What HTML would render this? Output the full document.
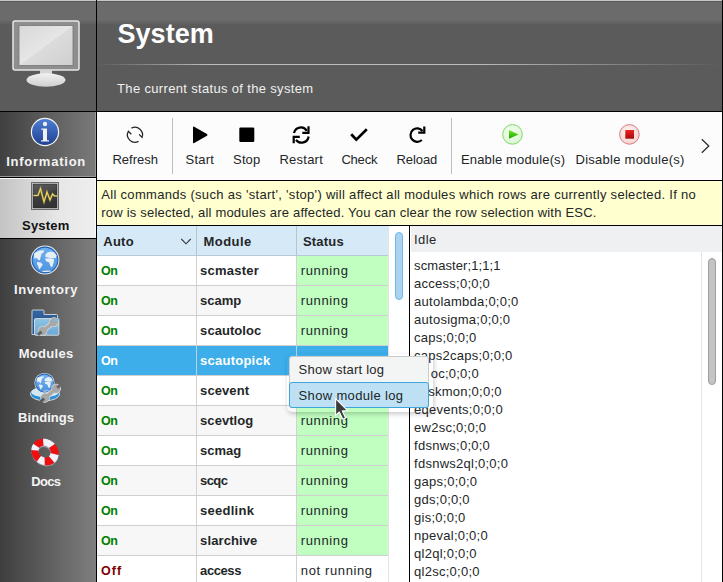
<!DOCTYPE html><html><head><meta charset="utf-8"><style>
html,body{margin:0;padding:0;width:723px;height:582px;overflow:hidden;background:#fff;}
body{position:relative;font-family:"Liberation Sans",sans-serif;}
.t{position:absolute;white-space:nowrap;font-family:"Liberation Sans",sans-serif;}
</style></head><body>
<div style="position:absolute;left:0px;top:112px;width:96px;height:470px;background:linear-gradient(to right,#3e3e3e,#7f7f7f);"></div>
<div style="position:absolute;left:0px;top:0px;width:723px;height:111px;background:#5b5b5b;"></div>
<div style="position:absolute;left:0px;top:1px;width:723px;height:25px;background:linear-gradient(to bottom,#6b6b6b 0px,#6b6b6b 19px,#5b5b5b 24px);"></div>
<div style="position:absolute;left:0px;top:0px;width:723px;height:1px;background:#c8c8c8;"></div>
<div style="position:absolute;left:0px;top:1px;width:723px;height:1px;background:#585858;"></div>
<div style="position:absolute;left:97px;top:64px;width:625px;height:1px;background:linear-gradient(to right,rgba(200,200,200,0) 0%,rgba(200,200,200,.9) 18%,rgba(200,200,200,.9) 60%,rgba(200,200,200,0) 100%);"></div>
<div style="position:absolute;left:0px;top:111px;width:723px;height:1px;background:#000;"></div>
<div style="position:absolute;left:96px;top:0px;width:1px;height:582px;background:#000;"></div>
<svg style="position:absolute;left:10px;top:18px" width="74" height="72" viewBox="0 0 74 72">
<defs><linearGradient id="scr" x1="0" y1="0" x2="1" y2="1"><stop offset="0" stop-color="#d8d8d8"/><stop offset="0.5" stop-color="#e6e6e6"/><stop offset="0.5" stop-color="#dcdcdc"/><stop offset="1" stop-color="#cfcfcf"/></linearGradient>
<linearGradient id="base" x1="0" y1="0" x2="0" y2="1"><stop offset="0" stop-color="#f2f2f2"/><stop offset="1" stop-color="#cfcfcf"/></linearGradient></defs>
<rect x="3" y="3" width="66" height="49" rx="2" fill="#8e8e8e" stroke="#e8e8e8" stroke-width="1.5"/>
<rect x="9" y="7.5" width="54" height="40" fill="url(#scr)" stroke="#777" stroke-width="0.8"/>
<rect x="30" y="52" width="12" height="5" fill="#d6d6d6"/>
<ellipse cx="36" cy="62" rx="19.5" ry="6.8" fill="url(#base)"/>
</svg>
<div style="position:absolute;left:0px;top:112px;width:96px;height:65px;background:linear-gradient(to right,#404040,#7a7a7a);"></div>
<div style="position:absolute;left:95px;top:112px;width:1px;height:65px;background:#9a9a9a;"></div>
<div style="position:absolute;left:0px;top:176px;width:96px;height:1px;background:#9a9a9a;"></div>
<div style="position:absolute;left:0px;top:177px;width:96px;height:1px;background:#000;"></div>
<div style="position:absolute;left:0px;top:178px;width:96px;height:60px;background:linear-gradient(to right,#c4c4c4,#e6e6e6 60%,#efefef);"></div>
<div style="position:absolute;left:0px;top:178px;width:96px;height:1px;background:#fafafa;"></div>
<div style="position:absolute;left:95px;top:178px;width:1px;height:60px;background:#fafafa;"></div>
<div style="position:absolute;left:0px;top:238px;width:96px;height:1px;background:#000;"></div>
<svg style="position:absolute;left:30px;top:117px" width="30" height="30" viewBox="0 0 30 30">
<defs><linearGradient id="ig" x1="0" y1="0" x2="0" y2="1"><stop offset="0" stop-color="#4d7fd6"/><stop offset="1" stop-color="#20418f"/></linearGradient></defs>
<circle cx="15" cy="15" r="13.6" fill="url(#ig)" stroke="#f4f4f4" stroke-width="1.2"/>
<circle cx="15" cy="7" r="2.2" fill="#f0f0f0"/>
<path d="M11.2 11.6 H17 V23.2 H19 V24.4 H11 V23.2 H13 V12.8 H11.2 Z" fill="#f0f0f0"/>
</svg>
<svg style="position:absolute;left:31px;top:182px" width="28" height="28" viewBox="0 0 28 28">
<defs><linearGradient id="sg" x1="0" y1="0" x2="0.3" y2="1"><stop offset="0" stop-color="#5c5c5c"/><stop offset="0.45" stop-color="#4a4a4a"/><stop offset="0.5" stop-color="#3e3e3e"/><stop offset="1" stop-color="#343434"/></linearGradient></defs>
<rect x="0.5" y="0.5" width="27" height="27" fill="#e4e4e4" stroke="#6a6a6a" stroke-width="1"/>
<rect x="2" y="2" width="24" height="24" fill="url(#sg)" stroke="#2a2a2a" stroke-width="0.6"/>
<path d="M2.5 13.5 H7 L9.5 6.5 L13 20 L16 10 L19 18 L21.5 12 L23.5 14 H26" fill="none" stroke="#c8b850" stroke-width="2.2" opacity="0.35"/>
<path d="M2.5 13.5 H7 L9.5 6.5 L13 20 L16 10 L19 18 L21.5 12 L23.5 14 H26" fill="none" stroke="#f0dc60" stroke-width="1.1"/>
</svg>
<svg style="position:absolute;left:29px;top:244px" width="32" height="32" viewBox="-1 -1 32 32"><defs><linearGradient id="gg1" x1="0" y1="0" x2="0" y2="1"><stop offset="0" stop-color="#6fb0f0"/><stop offset="1" stop-color="#4f94e0"/></linearGradient></defs>
<circle cx="15" cy="15" r="14.4" fill="#e8e8e8"/>
<circle cx="15" cy="15" r="13.4" fill="#1d5fb4"/>
<circle cx="15" cy="15" r="12.3" fill="url(#gg1)"/>
<path d="M4 8.5 C6 6.5 10 5 14 5.3 L13.6 7.6 L11.6 8.6 L10.8 11.5 L9.8 15.2 L8.4 15 L6.8 13 L4.2 13.6 Z" fill="#e6eef6"/>
<path d="M7.2 17 L10.8 17.4 L12.8 19.4 L11.2 22 L9.2 24.6 L8.2 21.2 L6.8 18.6 Z" fill="#e6eef6"/>
<path d="M15.4 9.6 L17.4 7.6 L21 6.6 L24.4 7.6 L26.4 10.2 L26 13 L21 13.2 L17.6 12.6 L15.4 12 Z" fill="#e6eef6"/>
<path d="M15 13.4 L20 13.2 L24 14 L23.6 18 L22.2 22 L20.6 21.6 L19 17.2 L16 16.2 Z" fill="#e6eef6"/>
<path d="M11.5 26.4 C15 25.4 19 25.4 22.5 26.1 C18.5 27.4 14.5 27.4 11.5 26.4 Z" fill="#e6eef6"/></svg>
<svg style="position:absolute;left:25px;top:305px" width="40" height="36" viewBox="25 305 40 36">
<defs><linearGradient id="fb" x1="0" y1="0" x2="0" y2="1"><stop offset="0" stop-color="#3565a4"/><stop offset="1" stop-color="#1f4a80"/></linearGradient>
<linearGradient id="ff" x1="0" y1="0" x2="0" y2="1"><stop offset="0" stop-color="#8cc4e6"/><stop offset="1" stop-color="#6aa8d4"/></linearGradient></defs>
<path d="M32 311 Q32 310 33 310 H43 Q44 310 44 311 V314.5 H56.5 Q57.5 314.5 57.5 315.5 V334.5 H32 Z" fill="url(#fb)" stroke="#dadada" stroke-width="0.9"/>
<rect x="34.5" y="318.6" width="24.4" height="16.6" rx="1" fill="url(#ff)" stroke="#e2e2e2" stroke-width="0.9"/>
<g transform="translate(48.2,326.6) rotate(-38)">
<rect x="-7.25" y="-2.6" width="14.5" height="5.2" fill="#dadada"/>
<circle cx="-7.25" cy="0" r="4.9" fill="#dadada"/><circle cx="7.25" cy="0" r="4.9" fill="#dadada"/>
<rect x="-7.25" y="-1.8" width="14.5" height="3.6" fill="#a8a8a8"/>
<circle cx="-7.25" cy="0" r="4.1" fill="#a8a8a8"/><circle cx="7.25" cy="0" r="4.1" fill="#a8a8a8"/>
<rect x="8.45" y="-1.5" width="4.5" height="3" fill="#80bce0"/>
<rect x="-12.95" y="-1.5" width="4.5" height="3" fill="#626262"/>
</g>
</svg>
<svg style="position:absolute;left:25px;top:369px" width="40" height="36" viewBox="25 369 40 36">
<ellipse cx="45" cy="394" rx="14.6" ry="6.8" fill="#2a8ed6" stroke="#d8d8d8" stroke-width="1"/>
<ellipse cx="45" cy="392.3" rx="13.4" ry="5" fill="#d2e8f2"/>
<g transform="translate(34,372.5) scale(0.7)"><defs><linearGradient id="gg2" x1="0" y1="0" x2="0" y2="1"><stop offset="0" stop-color="#6fb0f0"/><stop offset="1" stop-color="#4f94e0"/></linearGradient></defs>
<circle cx="15" cy="15" r="14.4" fill="#e8e8e8"/>
<circle cx="15" cy="15" r="13.4" fill="#1d5fb4"/>
<circle cx="15" cy="15" r="12.3" fill="url(#gg2)"/>
<path d="M4 8.5 C6 6.5 10 5 14 5.3 L13.6 7.6 L11.6 8.6 L10.8 11.5 L9.8 15.2 L8.4 15 L6.8 13 L4.2 13.6 Z" fill="#e6eef6"/>
<path d="M7.2 17 L10.8 17.4 L12.8 19.4 L11.2 22 L9.2 24.6 L8.2 21.2 L6.8 18.6 Z" fill="#e6eef6"/>
<path d="M15.4 9.6 L17.4 7.6 L21 6.6 L24.4 7.6 L26.4 10.2 L26 13 L21 13.2 L17.6 12.6 L15.4 12 Z" fill="#e6eef6"/>
<path d="M15 13.4 L20 13.2 L24 14 L23.6 18 L22.2 22 L20.6 21.6 L19 17.2 L16 16.2 Z" fill="#e6eef6"/>
<path d="M11.5 26.4 C15 25.4 19 25.4 22.5 26.1 C18.5 27.4 14.5 27.4 11.5 26.4 Z" fill="#e6eef6"/></g>
<g transform="translate(50.6,393.2) rotate(-40)">
<rect x="-7.25" y="-2.6" width="14.5" height="5.2" fill="#dadada"/>
<circle cx="-7.25" cy="0" r="4.9" fill="#dadada"/><circle cx="7.25" cy="0" r="4.9" fill="#dadada"/>
<rect x="-7.25" y="-1.8" width="14.5" height="3.6" fill="#a8a8a8"/>
<circle cx="-7.25" cy="0" r="4.1" fill="#a8a8a8"/><circle cx="7.25" cy="0" r="4.1" fill="#a8a8a8"/>
<rect x="8.45" y="-1.5" width="4.5" height="3" fill="#6a6a6a"/>
<rect x="-12.95" y="-1.5" width="4.5" height="3" fill="#5a5a5a"/>
</g>
</svg>
<svg style="position:absolute;left:29px;top:437px" width="32" height="30" viewBox="0 0 32 30"><path d="M29.66 17.12 L28.24 23.64 L23.54 28.18 L16.82 29.54 L9.89 27.36 L4.59 22.21 L2.34 15.48 L3.76 8.96 L8.46 4.42 L15.18 3.06 L22.11 5.24 L27.41 10.39 L29.66 17.12 L21.70 16.19 L20.69 13.18 L18.31 10.88 L15.21 9.90 L12.22 10.49 L10.13 12.51 L9.50 15.41 L10.51 18.42 L12.89 20.72 L15.99 21.70 L18.98 21.11 L21.07 19.09 L21.70 16.19Z" fill="#9a9aa8"/><path d="M29.59 18.11 L29.48 18.86 L29.32 19.59 L29.11 20.30 L28.87 21.00 L28.57 21.68 L28.24 22.34 L27.86 22.97 L27.45 23.57 L26.99 24.15 L26.50 24.69 L25.97 25.20 L25.41 25.68 L19.82 19.27 L20.07 19.06 L20.30 18.83 L20.52 18.59 L20.72 18.34 L20.91 18.07 L21.07 17.79 L21.22 17.50 L21.35 17.19 L21.46 16.88 L21.55 16.56 L21.62 16.24 L21.67 15.91Z" fill="#f2f2fa"/><path d="M25.41 25.68 L24.74 26.17 L24.03 26.61 L23.29 27.01 L22.52 27.35 L21.72 27.64 L20.89 27.88 L20.05 28.06 L19.18 28.19 L18.31 28.26 L17.42 28.27 L16.53 28.22 L15.63 28.12 L15.46 20.35 L15.86 20.39 L16.25 20.41 L16.65 20.41 L17.04 20.38 L17.43 20.33 L17.80 20.25 L18.17 20.14 L18.53 20.01 L18.87 19.86 L19.20 19.69 L19.52 19.49 L19.82 19.27Z" fill="#ee1010"/><path d="M15.63 28.12 L14.94 28.00 L14.24 27.85 L13.56 27.67 L12.87 27.45 L12.20 27.20 L11.54 26.92 L10.88 26.61 L10.24 26.27 L9.62 25.89 L9.01 25.50 L8.42 25.07 L7.85 24.62 L11.98 18.77 L12.23 18.98 L12.50 19.17 L12.77 19.35 L13.05 19.51 L13.33 19.67 L13.63 19.81 L13.92 19.93 L14.22 20.04 L14.53 20.14 L14.84 20.23 L15.14 20.29 L15.46 20.35Z" fill="#f2f2fa"/><path d="M7.85 24.62 L7.00 23.85 L6.21 23.04 L5.48 22.17 L4.81 21.25 L4.22 20.30 L3.70 19.31 L3.26 18.29 L2.90 17.25 L2.63 16.20 L2.44 15.14 L2.34 14.08 L2.32 13.02 L9.49 13.60 L9.50 14.07 L9.55 14.54 L9.63 15.01 L9.76 15.48 L9.92 15.95 L10.12 16.40 L10.35 16.84 L10.61 17.27 L10.91 17.68 L11.24 18.07 L11.60 18.43 L11.98 18.77Z" fill="#ee1010"/><path d="M2.32 13.02 L2.35 12.45 L2.41 11.89 L2.49 11.33 L2.60 10.78 L2.73 10.23 L2.89 9.70 L3.07 9.17 L3.28 8.66 L3.51 8.15 L3.76 7.66 L4.04 7.19 L4.34 6.73 L10.38 10.80 L10.25 11.00 L10.13 11.21 L10.01 11.43 L9.91 11.65 L9.82 11.88 L9.74 12.12 L9.67 12.35 L9.61 12.60 L9.56 12.84 L9.53 13.09 L9.50 13.34 L9.49 13.60Z" fill="#f2f2fa"/><path d="M4.34 6.73 L4.89 6.00 L5.50 5.31 L6.17 4.68 L6.88 4.10 L7.65 3.58 L8.46 3.12 L9.31 2.72 L10.19 2.39 L11.11 2.12 L12.05 1.92 L13.01 1.79 L13.99 1.73 L14.68 8.59 L14.25 8.61 L13.82 8.67 L13.40 8.75 L12.99 8.87 L12.59 9.02 L12.22 9.19 L11.85 9.40 L11.51 9.63 L11.19 9.89 L10.90 10.17 L10.63 10.47 L10.38 10.80Z" fill="#ee1010"/><path d="M13.99 1.73 L15.08 1.75 L16.17 1.85 L17.26 2.04 L18.35 2.30 L19.42 2.65 L20.46 3.08 L21.48 3.58 L22.47 4.16 L23.41 4.81 L24.30 5.52 L25.15 6.29 L25.93 7.12 L20.02 11.00 L19.67 10.63 L19.29 10.29 L18.89 9.97 L18.47 9.68 L18.03 9.42 L17.57 9.19 L17.11 9.00 L16.63 8.85 L16.14 8.72 L15.66 8.64 L15.17 8.59 L14.68 8.59Z" fill="#f2f2fa"/><path d="M25.93 7.12 L26.59 7.92 L27.19 8.75 L27.73 9.62 L28.21 10.51 L28.63 11.43 L28.98 12.37 L29.26 13.32 L29.47 14.28 L29.61 15.25 L29.67 16.21 L29.67 17.17 L29.59 18.11 L21.67 15.91 L21.70 15.49 L21.71 15.06 L21.67 14.63 L21.61 14.20 L21.52 13.77 L21.39 13.35 L21.23 12.93 L21.04 12.52 L20.83 12.12 L20.59 11.73 L20.32 11.36 L20.02 11.00Z" fill="#ee1010"/></svg>
<div class="t" style="left:6.20px;top:155px;font-size:13px;line-height:13px;font-weight:bold;color:#f4f4f4;letter-spacing:0.760px;">Information</div>
<div class="t" style="left:22.10px;top:219px;font-size:13px;line-height:13px;font-weight:bold;color:#111111;letter-spacing:0.170px;">System</div>
<div class="t" style="left:14.00px;top:283px;font-size:13px;line-height:13px;font-weight:bold;color:#f4f4f4;letter-spacing:0.625px;">Inventory</div>
<div class="t" style="left:18.70px;top:347px;font-size:13px;line-height:13px;font-weight:bold;color:#f4f4f4;letter-spacing:0.300px;">Modules</div>
<div class="t" style="left:18.10px;top:411px;font-size:13px;line-height:13px;font-weight:bold;color:#f4f4f4;letter-spacing:0.057px;">Bindings</div>
<div class="t" style="left:31.20px;top:475px;font-size:13px;line-height:13px;font-weight:bold;color:#f4f4f4;letter-spacing:-0.667px;">Docs</div>
<div class="t" style="left:117.50px;top:21px;font-size:27px;line-height:27px;font-weight:bold;color:#ffffff;letter-spacing:0.030px;">System</div>
<div class="t" style="left:117.10px;top:82px;font-size:13px;line-height:13px;color:#f0f0f0;letter-spacing:0.332px;">The current status of the system</div>
<div style="position:absolute;left:97px;top:112px;width:625px;height:68px;background:#fcfcfc;"></div>
<div style="position:absolute;left:97px;top:180px;width:626px;height:1px;background:#000;"></div>
<div style="position:absolute;left:722px;top:0px;width:1px;height:582px;background:#000;"></div>
<div style="position:absolute;left:172px;top:118px;width:1px;height:56px;background:#bdbdbd;"></div>
<div style="position:absolute;left:451px;top:118px;width:1px;height:56px;background:#bdbdbd;"></div>
<div class="t" style="left:112.50px;top:153px;font-size:13px;line-height:13px;color:#232627;letter-spacing:-0.017px;">Refresh</div>
<div class="t" style="left:185.60px;top:153px;font-size:13px;line-height:13px;color:#232627;letter-spacing:0.213px;">Start</div>
<div class="t" style="left:233.10px;top:153px;font-size:13px;line-height:13px;color:#232627;letter-spacing:0.117px;">Stop</div>
<div class="t" style="left:279.50px;top:153px;font-size:13px;line-height:13px;color:#232627;letter-spacing:0.233px;">Restart</div>
<div class="t" style="left:341.40px;top:153px;font-size:13px;line-height:13px;color:#232627;letter-spacing:-0.200px;">Check</div>
<div class="t" style="left:396.50px;top:153px;font-size:13px;line-height:13px;color:#232627;letter-spacing:-0.080px;">Reload</div>
<div class="t" style="left:461.00px;top:153px;font-size:13px;line-height:13px;color:#232627;letter-spacing:0.147px;">Enable module(s)</div>
<div class="t" style="left:575.50px;top:153px;font-size:13px;line-height:13px;color:#232627;letter-spacing:0.259px;">Disable module(s)</div>
<svg style="position:absolute;left:97px;top:112px" width="625" height="68" viewBox="97 112 625 68">
<g fill="none" stroke="#232627" stroke-width="1.3">
<path d="M131.48 128.18 A7.5 7.5 0 0 1 142.05 137.37 L139.1 134.4"/>
<path d="M138.52 141.42 A7.5 7.5 0 0 1 128.38 131.28 L131.3 134.3"/>
</g>
<path d="M193 127.5 Q193 126.2 194.2 126.8 L207 134 Q208 135 207 135.8 L194.2 143 Q193 143.6 193 142.4 Z" fill="#000"/>
<rect x="239.3" y="127.5" width="15" height="14.6" rx="1.3" fill="#000"/>
<g fill="none" stroke="#000" stroke-width="2.2">
<path d="M294 133 A7 7 0 0 1 306.8 130.8"/>
<path d="M308.6 136.5 A7 7 0 0 1 296 139.8"/>
<path d="M308.5 126.3 V132.8 H302.3"/>
<path d="M293.7 143.3 V136.8 H299.8"/>
<path d="M351.2 134.2 L356.3 139.6 L366.8 129.2" stroke-width="2.7"/>
<path d="M422.5 131 A6.7 6.7 0 1 0 421.8 140"/>
<path d="M424.3 126.5 V132.6 H418.2"/>
</g>
<defs>
<radialGradient id="gc" cx="0.45" cy="0.35" r="0.7"><stop offset="0" stop-color="#f4fff0"/><stop offset="1" stop-color="#d8f5d0"/></radialGradient>
<linearGradient id="gt" x1="0" y1="0" x2="0" y2="1"><stop offset="0" stop-color="#66ee22"/><stop offset="1" stop-color="#22a000"/></linearGradient>
<radialGradient id="rc" cx="0.45" cy="0.35" r="0.7"><stop offset="0" stop-color="#fff4f4"/><stop offset="1" stop-color="#f5d0d0"/></radialGradient>
<linearGradient id="rt" x1="0" y1="0" x2="0" y2="1"><stop offset="0" stop-color="#ee2222"/><stop offset="1" stop-color="#a80808"/></linearGradient>
</defs>
<circle cx="512.5" cy="134.4" r="9.8" fill="url(#gc)" stroke="#7ed86a" stroke-width="1"/>
<path d="M509 130 L518.5 134.4 L509 138.8 Z" fill="url(#gt)"/>
<circle cx="629.4" cy="134.4" r="9.8" fill="url(#rc)" stroke="#d87a7a" stroke-width="1"/>
<rect x="625.3" y="130" width="8.7" height="8.7" fill="url(#rt)"/>
<path d="M701.8 139.3 L708.8 146 L701.8 152.7" fill="none" stroke="#232627" stroke-width="1.2"/>
</svg>
<div style="position:absolute;left:97px;top:181px;width:625px;height:44px;background:#ffffcf;"></div>
<div style="position:absolute;left:97px;top:225px;width:626px;height:1px;background:#000;"></div>
<div class="t" style="left:101.30px;top:188px;font-size:13px;line-height:13px;color:#232627;letter-spacing:0.300px;">All commands (such as 'start', 'stop') will affect all modules which rows are currently selected. If no</div>
<div class="t" style="left:101.30px;top:206px;font-size:13px;line-height:13px;color:#232627;letter-spacing:0.204px;">row is selected, all modules are affected. You can clear the row selection with ESC.</div>
<div style="position:absolute;left:97px;top:226px;width:312px;height:356px;background:#ffffff;"></div>
<div style="position:absolute;left:97px;top:226px;width:291px;height:29px;background:#d6e9f7;"></div>
<div style="position:absolute;left:97px;top:255px;width:291px;height:1px;background:#b8c8d4;"></div>
<div style="position:absolute;left:196px;top:226px;width:1px;height:29px;background:#b4c4d0;"></div>
<div style="position:absolute;left:296px;top:226px;width:1px;height:29px;background:#b4c4d0;"></div>
<div class="t" style="left:103.20px;top:235px;font-size:13px;line-height:13px;font-weight:bold;color:#232627;letter-spacing:0.300px;">Auto</div>
<div class="t" style="left:203.60px;top:235px;font-size:13px;line-height:13px;font-weight:bold;color:#232627;letter-spacing:0.420px;">Module</div>
<div class="t" style="left:302.90px;top:235px;font-size:13px;line-height:13px;font-weight:bold;color:#232627;letter-spacing:0.210px;">Status</div>
<svg style="position:absolute;left:180px;top:237px" width="12" height="9" viewBox="0 0 12 9"><path d="M1.3 2 L6 6.8 L10.7 2" fill="none" stroke="#31363b" stroke-width="1.1"/></svg>
<div style="position:absolute;left:97px;top:256px;width:291px;height:29px;background:#ffffff;"></div>
<div style="position:absolute;left:297px;top:256px;width:91px;height:29px;background:#c0ffc0;"></div>
<div style="position:absolute;left:97px;top:285px;width:291px;height:1px;background:#cfcfcf;"></div>
<div style="position:absolute;left:196px;top:256px;width:1px;height:29px;background:#d2d2d2;"></div>
<div style="position:absolute;left:296px;top:256px;width:1px;height:29px;background:#d2d2d2;"></div>
<div class="t" style="left:100.90px;top:265px;font-size:12.5px;line-height:12.5px;font-weight:bold;color:#008000;letter-spacing:-0.250px;">On</div>
<div class="t" style="left:200.10px;top:264px;font-size:13px;line-height:13px;font-weight:bold;color:#232627;letter-spacing:0.243px;">scmaster</div>
<div class="t" style="left:300.80px;top:264px;font-size:13px;line-height:13px;color:#232627;letter-spacing:0.625px;">running</div>
<div style="position:absolute;left:97px;top:286px;width:291px;height:29px;background:#f7f7f7;"></div>
<div style="position:absolute;left:297px;top:286px;width:91px;height:29px;background:#c0ffc0;"></div>
<div style="position:absolute;left:97px;top:315px;width:291px;height:1px;background:#cfcfcf;"></div>
<div style="position:absolute;left:196px;top:286px;width:1px;height:29px;background:#d2d2d2;"></div>
<div style="position:absolute;left:296px;top:286px;width:1px;height:29px;background:#d2d2d2;"></div>
<div class="t" style="left:100.90px;top:295px;font-size:12.5px;line-height:12.5px;font-weight:bold;color:#008000;letter-spacing:-0.250px;">On</div>
<div class="t" style="left:200.10px;top:294px;font-size:13px;line-height:13px;font-weight:bold;color:#232627;letter-spacing:0.000px;">scamp</div>
<div class="t" style="left:300.80px;top:294px;font-size:13px;line-height:13px;color:#232627;letter-spacing:0.625px;">running</div>
<div style="position:absolute;left:97px;top:316px;width:291px;height:29px;background:#ffffff;"></div>
<div style="position:absolute;left:297px;top:316px;width:91px;height:29px;background:#c0ffc0;"></div>
<div style="position:absolute;left:97px;top:345px;width:291px;height:1px;background:#cfcfcf;"></div>
<div style="position:absolute;left:196px;top:316px;width:1px;height:29px;background:#d2d2d2;"></div>
<div style="position:absolute;left:296px;top:316px;width:1px;height:29px;background:#d2d2d2;"></div>
<div class="t" style="left:100.90px;top:325px;font-size:12.5px;line-height:12.5px;font-weight:bold;color:#008000;letter-spacing:-0.250px;">On</div>
<div class="t" style="left:200.10px;top:324px;font-size:13px;line-height:13px;font-weight:bold;color:#232627;letter-spacing:0.062px;">scautoloc</div>
<div class="t" style="left:300.80px;top:324px;font-size:13px;line-height:13px;color:#232627;letter-spacing:0.625px;">running</div>
<div style="position:absolute;left:97px;top:346px;width:291px;height:29px;background:#3daee9;"></div>
<div style="position:absolute;left:97px;top:375px;width:291px;height:1px;background:#cfcfcf;"></div>
<div style="position:absolute;left:296px;top:346px;width:1px;height:29px;background:#b9d3e6;"></div>
<div style="position:absolute;left:196px;top:346px;width:1px;height:29px;background:#b9d3e6;"></div>
<div class="t" style="left:100.90px;top:355px;font-size:12.5px;line-height:12.5px;font-weight:bold;color:#ffffff;letter-spacing:-0.250px;">On</div>
<div class="t" style="left:200.10px;top:354px;font-size:13px;line-height:13px;font-weight:bold;color:#ffffff;letter-spacing:0.239px;">scautopick</div>
<div class="t" style="left:300.80px;top:354px;font-size:13px;line-height:13px;color:#ffffff;letter-spacing:0.625px;">running</div>
<div style="position:absolute;left:97px;top:376px;width:291px;height:29px;background:#ffffff;"></div>
<div style="position:absolute;left:297px;top:376px;width:91px;height:29px;background:#c0ffc0;"></div>
<div style="position:absolute;left:97px;top:405px;width:291px;height:1px;background:#cfcfcf;"></div>
<div style="position:absolute;left:196px;top:376px;width:1px;height:29px;background:#d2d2d2;"></div>
<div style="position:absolute;left:296px;top:376px;width:1px;height:29px;background:#d2d2d2;"></div>
<div class="t" style="left:100.90px;top:385px;font-size:12.5px;line-height:12.5px;font-weight:bold;color:#008000;letter-spacing:-0.250px;">On</div>
<div class="t" style="left:200.10px;top:384px;font-size:13px;line-height:13px;font-weight:bold;color:#232627;letter-spacing:0.083px;">scevent</div>
<div class="t" style="left:300.80px;top:384px;font-size:13px;line-height:13px;color:#232627;letter-spacing:0.625px;">running</div>
<div style="position:absolute;left:97px;top:406px;width:291px;height:29px;background:#f7f7f7;"></div>
<div style="position:absolute;left:297px;top:406px;width:91px;height:29px;background:#c0ffc0;"></div>
<div style="position:absolute;left:97px;top:435px;width:291px;height:1px;background:#cfcfcf;"></div>
<div style="position:absolute;left:196px;top:406px;width:1px;height:29px;background:#d2d2d2;"></div>
<div style="position:absolute;left:296px;top:406px;width:1px;height:29px;background:#d2d2d2;"></div>
<div class="t" style="left:100.90px;top:415px;font-size:12.5px;line-height:12.5px;font-weight:bold;color:#008000;letter-spacing:-0.250px;">On</div>
<div class="t" style="left:200.10px;top:414px;font-size:13px;line-height:13px;font-weight:bold;color:#232627;letter-spacing:0.036px;">scevtlog</div>
<div class="t" style="left:300.80px;top:414px;font-size:13px;line-height:13px;color:#232627;letter-spacing:0.625px;">running</div>
<div style="position:absolute;left:97px;top:436px;width:291px;height:29px;background:#ffffff;"></div>
<div style="position:absolute;left:297px;top:436px;width:91px;height:29px;background:#c0ffc0;"></div>
<div style="position:absolute;left:97px;top:465px;width:291px;height:1px;background:#cfcfcf;"></div>
<div style="position:absolute;left:196px;top:436px;width:1px;height:29px;background:#d2d2d2;"></div>
<div style="position:absolute;left:296px;top:436px;width:1px;height:29px;background:#d2d2d2;"></div>
<div class="t" style="left:100.90px;top:445px;font-size:12.5px;line-height:12.5px;font-weight:bold;color:#008000;letter-spacing:-0.250px;">On</div>
<div class="t" style="left:200.10px;top:444px;font-size:13px;line-height:13px;font-weight:bold;color:#232627;letter-spacing:0.000px;">scmag</div>
<div class="t" style="left:300.80px;top:444px;font-size:13px;line-height:13px;color:#232627;letter-spacing:0.625px;">running</div>
<div style="position:absolute;left:97px;top:466px;width:291px;height:29px;background:#f7f7f7;"></div>
<div style="position:absolute;left:297px;top:466px;width:91px;height:29px;background:#c0ffc0;"></div>
<div style="position:absolute;left:97px;top:495px;width:291px;height:1px;background:#cfcfcf;"></div>
<div style="position:absolute;left:196px;top:466px;width:1px;height:29px;background:#d2d2d2;"></div>
<div style="position:absolute;left:296px;top:466px;width:1px;height:29px;background:#d2d2d2;"></div>
<div class="t" style="left:100.90px;top:475px;font-size:12.5px;line-height:12.5px;font-weight:bold;color:#008000;letter-spacing:-0.250px;">On</div>
<div class="t" style="left:200.10px;top:474px;font-size:13px;line-height:13px;font-weight:bold;color:#232627;letter-spacing:-0.617px;">scqc</div>
<div class="t" style="left:300.80px;top:474px;font-size:13px;line-height:13px;color:#232627;letter-spacing:0.625px;">running</div>
<div style="position:absolute;left:97px;top:496px;width:291px;height:29px;background:#ffffff;"></div>
<div style="position:absolute;left:297px;top:496px;width:91px;height:29px;background:#c0ffc0;"></div>
<div style="position:absolute;left:97px;top:525px;width:291px;height:1px;background:#cfcfcf;"></div>
<div style="position:absolute;left:196px;top:496px;width:1px;height:29px;background:#d2d2d2;"></div>
<div style="position:absolute;left:296px;top:496px;width:1px;height:29px;background:#d2d2d2;"></div>
<div class="t" style="left:100.90px;top:505px;font-size:12.5px;line-height:12.5px;font-weight:bold;color:#008000;letter-spacing:-0.250px;">On</div>
<div class="t" style="left:200.10px;top:504px;font-size:13px;line-height:13px;font-weight:bold;color:#232627;letter-spacing:0.250px;">seedlink</div>
<div class="t" style="left:300.80px;top:504px;font-size:13px;line-height:13px;color:#232627;letter-spacing:0.625px;">running</div>
<div style="position:absolute;left:97px;top:526px;width:291px;height:29px;background:#f7f7f7;"></div>
<div style="position:absolute;left:297px;top:526px;width:91px;height:29px;background:#c0ffc0;"></div>
<div style="position:absolute;left:97px;top:555px;width:291px;height:1px;background:#cfcfcf;"></div>
<div style="position:absolute;left:196px;top:526px;width:1px;height:29px;background:#d2d2d2;"></div>
<div style="position:absolute;left:296px;top:526px;width:1px;height:29px;background:#d2d2d2;"></div>
<div class="t" style="left:100.90px;top:535px;font-size:12.5px;line-height:12.5px;font-weight:bold;color:#008000;letter-spacing:-0.250px;">On</div>
<div class="t" style="left:200.10px;top:534px;font-size:13px;line-height:13px;font-weight:bold;color:#232627;letter-spacing:0.106px;">slarchive</div>
<div class="t" style="left:300.80px;top:534px;font-size:13px;line-height:13px;color:#232627;letter-spacing:0.625px;">running</div>
<div style="position:absolute;left:97px;top:556px;width:291px;height:29px;background:#ffffff;"></div>
<div style="position:absolute;left:97px;top:585px;width:291px;height:1px;background:#cfcfcf;"></div>
<div style="position:absolute;left:196px;top:556px;width:1px;height:29px;background:#d2d2d2;"></div>
<div style="position:absolute;left:296px;top:556px;width:1px;height:29px;background:#d2d2d2;"></div>
<div class="t" style="left:100.90px;top:565px;font-size:12.5px;line-height:12.5px;font-weight:bold;color:#800000;letter-spacing:1.050px;">Off</div>
<div class="t" style="left:200.10px;top:564px;font-size:13px;line-height:13px;font-weight:bold;color:#232627;letter-spacing:-0.420px;">access</div>
<div class="t" style="left:300.80px;top:564px;font-size:13px;line-height:13px;color:#232627;letter-spacing:0.625px;">not running</div>
<div style="position:absolute;left:388px;top:226px;width:21px;height:356px;background:#ffffff;"></div>
<div style="position:absolute;left:388px;top:226px;width:1px;height:356px;background:#e4e4e4;"></div>
<div style="position:absolute;left:395px;top:232px;width:6px;height:66px;background:#abd3ef;border:1px solid #6db9eb;border-radius:4px;"></div>
<div style="position:absolute;left:409px;top:226px;width:1px;height:356px;background:#000;"></div>
<div style="position:absolute;left:410px;top:226px;width:312px;height:356px;background:#ffffff;"></div>
<div style="position:absolute;left:411px;top:226px;width:311px;height:26px;background:#eff0f1;"></div>
<div class="t" style="left:414.10px;top:233px;font-size:13px;line-height:13px;color:#232627;letter-spacing:0.383px;">Idle</div>
<div style="position:absolute;left:701px;top:252px;width:1px;height:330px;background:#e4e4e4;"></div>
<div style="position:absolute;left:708px;top:258px;width:6px;height:125px;background:#c4c4c4;border:1px solid #9e9e9e;border-radius:4px;"></div>
<div class="t" style="left:414.10px;top:259px;font-size:13px;line-height:13px;color:#232627;letter-spacing:0.088px;">scmaster;1;1;1</div>
<div class="t" style="left:414.10px;top:277px;font-size:13px;line-height:13px;color:#232627;letter-spacing:0.250px;">access;0;0;0</div>
<div class="t" style="left:414.10px;top:295px;font-size:13px;line-height:13px;color:#232627;letter-spacing:0.250px;">autolambda;0;0;0</div>
<div class="t" style="left:414.10px;top:313px;font-size:13px;line-height:13px;color:#232627;letter-spacing:0.250px;">autosigma;0;0;0</div>
<div class="t" style="left:414.10px;top:331px;font-size:13px;line-height:13px;color:#232627;letter-spacing:0.250px;">caps;0;0;0</div>
<div class="t" style="left:414.10px;top:349px;font-size:13px;line-height:13px;color:#232627;letter-spacing:0.250px;">caps2caps;0;0;0</div>
<div class="t" style="left:430.70px;top:367px;font-size:13px;line-height:13px;color:#232627;letter-spacing:0.250px;">oc;0;0;0</div>
<div class="t" style="left:428.20px;top:385px;font-size:13px;line-height:13px;color:#232627;letter-spacing:0.250px;">skmon;0;0;0</div>
<div class="t" style="left:414.10px;top:403px;font-size:13px;line-height:13px;color:#232627;letter-spacing:0.250px;">eqevents;0;0;0</div>
<div class="t" style="left:414.10px;top:421px;font-size:13px;line-height:13px;color:#232627;letter-spacing:0.250px;">ew2sc;0;0;0</div>
<div class="t" style="left:414.10px;top:439px;font-size:13px;line-height:13px;color:#232627;letter-spacing:0.250px;">fdsnws;0;0;0</div>
<div class="t" style="left:414.10px;top:457px;font-size:13px;line-height:13px;color:#232627;letter-spacing:0.250px;">fdsnws2ql;0;0;0</div>
<div class="t" style="left:414.10px;top:475px;font-size:13px;line-height:13px;color:#232627;letter-spacing:0.250px;">gaps;0;0;0</div>
<div class="t" style="left:414.10px;top:493px;font-size:13px;line-height:13px;color:#232627;letter-spacing:0.250px;">gds;0;0;0</div>
<div class="t" style="left:414.10px;top:511px;font-size:13px;line-height:13px;color:#232627;letter-spacing:0.250px;">gis;0;0;0</div>
<div class="t" style="left:414.10px;top:529px;font-size:13px;line-height:13px;color:#232627;letter-spacing:0.250px;">npeval;0;0;0</div>
<div class="t" style="left:414.10px;top:547px;font-size:13px;line-height:13px;color:#232627;letter-spacing:0.250px;">ql2ql;0;0;0</div>
<div class="t" style="left:414.10px;top:565px;font-size:13px;line-height:13px;color:#232627;letter-spacing:0.250px;">ql2sc;0;0;0</div>
<div style="position:absolute;left:287px;top:354px;width:146px;height:58px;border-radius:5px;box-shadow:1px 2px 5px rgba(0,0,0,.22);"></div>
<div style="position:absolute;left:289px;top:356px;width:138px;height:50px;background:#f3f4f4;border:1px solid #c9cbcc;border-radius:3px;"></div>
<div style="position:absolute;left:289px;top:382px;width:138px;height:24px;background:#bde0f4;border:1px solid #3ea4dc;border-radius:3px;"></div>
<div class="t" style="left:298.60px;top:363px;font-size:13px;line-height:13px;color:#232627;letter-spacing:0.235px;">Show start log</div>
<div class="t" style="left:298.60px;top:389px;font-size:13px;line-height:13px;color:#232627;letter-spacing:0.339px;">Show module log</div>
<svg style="position:absolute;left:333px;top:396px" width="18" height="25" viewBox="333 396 18 25"><path d="M335.6 398.6 L335.6 415.4 L339.3 412 L342.8 419.3 L345.6 418 L342.3 410.9 L347.6 410.6 Z" fill="#3c3c3c" stroke="#ffffff" stroke-width="1.1" stroke-linejoin="round"/></svg>
</body></html>
